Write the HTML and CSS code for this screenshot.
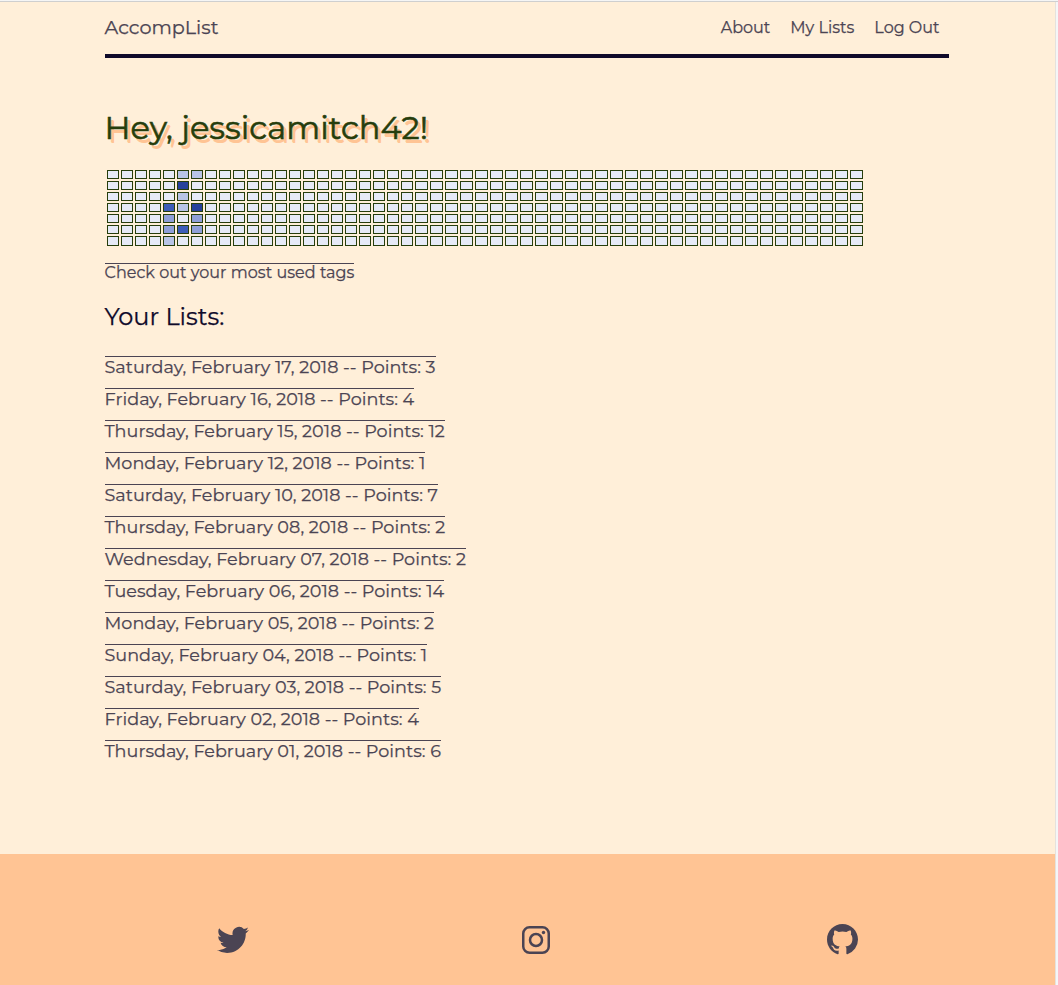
FILE: index.html
```html
<!DOCTYPE html>
<html lang="en">
<head>
<meta charset="utf-8">
<title>AccompList</title>
<link rel="stylesheet" href="styles.css">
</head>
<body>
<div class="page">
  <header class="header">
    <a class="brand">AccompList</a>
    <nav class="nav"><a>About</a><a>My Lists</a><a>Log Out</a></nav>
  </header>
  <main class="main">
    <h1 class="greeting">Hey, jessicamitch42!</h1>
    <div class="calendar" id="calendar"></div>
    <a class="tags">Check out your most used tags</a>
    <h2 class="heading">Your Lists:</h2>
    <ul class="lists">
      <li><a>Saturday, February 17, 2018 -- Points: 3</a></li>
      <li><a>Friday, February 16, 2018 -- Points: 4</a></li>
      <li><a>Thursday, February 15, 2018 -- Points: 12</a></li>
      <li><a>Monday, February 12, 2018 -- Points: 1</a></li>
      <li><a>Saturday, February 10, 2018 -- Points: 7</a></li>
      <li><a>Thursday, February 08, 2018 -- Points: 2</a></li>
      <li><a>Wednesday, February 07, 2018 -- Points: 2</a></li>
      <li><a>Tuesday, February 06, 2018 -- Points: 14</a></li>
      <li><a>Monday, February 05, 2018 -- Points: 2</a></li>
      <li><a>Sunday, February 04, 2018 -- Points: 1</a></li>
      <li><a>Saturday, February 03, 2018 -- Points: 5</a></li>
      <li><a>Friday, February 02, 2018 -- Points: 4</a></li>
      <li><a>Thursday, February 01, 2018 -- Points: 6</a></li>
    </ul>
  </main>
  <footer class="footer">
    <svg class="icon" viewBox="0 0 24 24"><path d="M23.954 4.569a10 10 0 0 1-2.825.775 4.958 4.958 0 0 0 2.163-2.723 9.99 9.99 0 0 1-3.127 1.184 4.92 4.92 0 0 0-8.384 4.482C7.691 8.094 4.066 6.13 1.64 3.161a4.822 4.822 0 0 0-.666 2.475c0 1.71.87 3.213 2.188 4.096a4.904 4.904 0 0 1-2.228-.616v.061a4.923 4.923 0 0 0 3.946 4.827 4.996 4.996 0 0 1-2.212.085 4.937 4.937 0 0 0 4.604 3.417 9.868 9.868 0 0 1-6.102 2.105c-.39 0-.779-.023-1.17-.067a13.995 13.995 0 0 0 7.557 2.209c9.054 0 13.999-7.496 13.999-13.986 0-.209 0-.42-.015-.63a9.936 9.936 0 0 0 2.46-2.548z"/></svg>
    <svg class="icon insta" viewBox="0 0 28 28"><rect x="1.25" y="1.25" width="25.5" height="25.5" rx="6.3"/><circle cx="14" cy="14" r="6"/><circle class="dot" cx="21.5" cy="6.5" r="1.7"/></svg>
    <svg class="icon github" viewBox="0 0 16 16"><path d="M8 0C3.58 0 0 3.58 0 8c0 3.54 2.29 6.53 5.47 7.59.4.07.55-.17.55-.38 0-.19-.01-.82-.01-1.49-2.01.37-2.53-.49-2.69-.94-.09-.23-.48-.94-.82-1.13-.28-.15-.68-.52-.01-.53.63-.01 1.08.58 1.23.82.72 1.21 1.87.87 2.33.66.07-.52.28-.87.51-1.07-1.78-.2-3.64-.89-3.64-3.95 0-.87.31-1.59.82-2.15-.08-.2-.36-1.02.08-2.12 0 0 .67-.21 2.2.82a7.6 7.6 0 0 1 4 0c1.53-1.04 2.2-.82 2.2-.82.44 1.1.16 1.92.08 2.12.51.56.82 1.27.82 2.15 0 3.07-1.87 3.75-3.65 3.95.29.25.54.73.54 1.48 0 1.07-.01 1.93-.01 2.2 0 .21.15.46.55.38A8.01 8.01 0 0 0 16 8c0-4.42-3.58-8-8-8z"/></svg>
  </footer>
</div>
<script src="script.js"></script>
</body>
</html>
```
FILE: styles.css
```css
*, *::before { box-sizing: border-box; }
body { margin: 0; background: #f5f6f8; color: #4b4453; font-family: Montserrat, Inter, sans-serif; -webkit-text-stroke: .25px; overflow: hidden; }
.page { width: 1056px; height: 985px; display: flex; flex-direction: column; background: #ffefd9; border-right: 1px solid #e6e2dc; box-shadow: 2px 0 #f5f6f8; }
.page::before { content: ""; width: 1058px; height: 2px; flex: none; background: #f5f5f5; border-bottom: 1px solid #cfcfcf; }
.header { height: 56px; margin-left: 104.5px; width: 844.5px; display: flex; justify-content: space-between; align-items: center; border-bottom: 4px solid #0f0a2a; padding: 0 9.5px 2px 0; }
.brand { font-size: 19.2px; }
.nav { display: flex; gap: 20px; font-size: 16px; }
.main { flex: 1; padding: 48px 0 0 104.5px; }
.greeting { margin: 0; height: 64px; line-height: 44px; font-size: 32px; font-weight: 400; letter-spacing: .03px; color: #263d0c; -webkit-text-stroke: .6px; text-shadow: 3px 3px #ffc494, 3.5px 3.5px #ffc494; }
.calendar { display: grid; width: max-content; margin-left: 2.5px; grid-template-columns: repeat(22, 12px) repeat(30, 13px); grid-template-rows: repeat(6, 9px) 10px; gap: 2px; }
.day { border: 1px solid #263d0c; background: #e6eaf7; }
.level-1 { background: #b8c4e6; }
.level-2 { background: #8f9fd8; }
.level-3 { background: #3d5cb8; }
.level-4 { background: #26409c; }
.tags { display: block; width: max-content; height: 20px; margin-top: 17px; border-top: 1px solid #4b4453; font-size: 16px; letter-spacing: .035px; line-height: 18px; white-space: nowrap; }
.heading { margin: 18px 0 0; height: 55px; line-height: 32px; font-size: 24px; font-weight: 400; color: #0f0a2a; }
.lists { list-style: none; margin: 0; padding: 0; }
.lists li { height: 32px; }
.lists a { display: block; width: max-content; border-top: 1px solid #4b4453; font-size: 17.6px; letter-spacing: .025px; line-height: 20px; white-space: nowrap; }
.footer { height: 131px; flex: none; background: #ffc494; padding: 70px 0 0 217px; display: flex; gap: 273px; }
.icon { width: 32px; height: 32px; flex: none; fill: #4b4453; }
.insta { width: 28px; height: 28px; margin: 2px 4px 2px 0; fill: none; stroke: #4b4453; stroke-width: 2.5; }
.dot { fill: #4b4453; stroke: none; }
.github { width: 31px; height: 31px; }
```
FILE: script.js
```js
const activity = { "0-5": 1, "0-6": 1, "1-5": 4, "2-5": 1, "3-4": 3, "3-5": 1, "3-6": 4,
  "4-4": 2, "4-6": 2, "5-4": 2, "5-5": 3, "5-6": 2, "6-4": 1 };
const calendar = document.getElementById("calendar");
for (let day = 0; day < 7; day++) {
  for (let week = 0; week < 52; week++) {
    const cell = document.createElement("div");
    const level = activity[day + "-" + week];
    cell.className = level ? "day level-" + level : "day";
    calendar.append(cell);
  }
}
```
